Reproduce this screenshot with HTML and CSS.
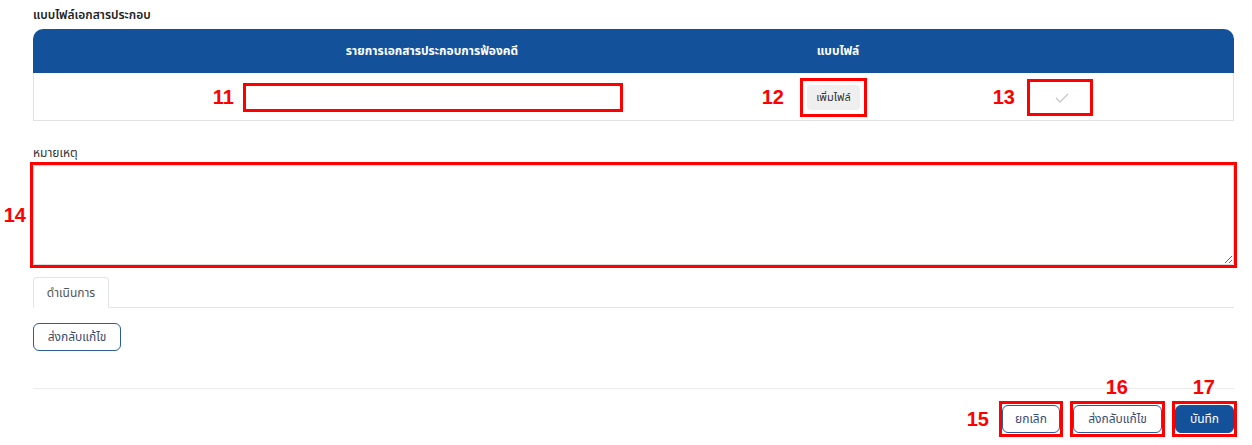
FILE: index.html
```html
<!DOCTYPE html>
<html lang="th">
<head>
<meta charset="utf-8">
<title>แบบไฟล์เอกสารประกอบ</title>
<link rel="stylesheet" href="styles.css">
</head>
<body>
<div class="page">
  <div class="section-title">แบบไฟล์เอกสารประกอบ</div>

  <div class="doc-table">
    <div class="doc-head">
      <div class="cell cell-name">รายการเอกสารประกอบการฟ้องคดี</div>
      <div class="cell cell-type">แบบไฟล์</div>
      <div class="cell cell-check"></div>
    </div>
    <div class="doc-row">
      <div class="cell cell-name">
        <div class="anno">
          <span class="anno-num num-left">11</span>
          <div class="anno-box box-name"></div>
        </div>
      </div>
      <div class="cell cell-type">
        <div class="anno">
          <span class="anno-num num-left num-12">12</span>
          <div class="anno-box box-file"><button class="btn-file" type="button">เพิ่มไฟล์</button></div>
        </div>
      </div>
      <div class="cell cell-check">
        <div class="anno">
          <span class="anno-num num-left num-13">13</span>
          <div class="anno-box box-check">
            <svg class="check" width="14" height="10" viewBox="0 0 14 10"><polyline points="1,5 5,9 13,1" fill="none" stroke="#c8c8c8" stroke-width="1.3"/></svg>
          </div>
        </div>
      </div>
    </div>
  </div>

  <div class="note-label">หมายเหตุ</div>
  <div class="anno anno-block">
    <span class="anno-num num-left num-14">14</span>
    <div class="anno-box box-note"><textarea class="note"></textarea></div>
  </div>

  <div class="tabs">
    <div class="tab">ดำเนินการ</div>
  </div>
  <div class="actions">
    <button class="btn btn-outline btn-return" type="button">ส่งกลับแก้ไข</button>
  </div>

  <div class="divider"></div>

  <div class="footer">
    <div class="anno">
      <span class="anno-num num-left num-15">15</span>
      <div class="anno-box box-btn"><button class="btn btn-outline btn-cancel" type="button">ยกเลิก</button></div>
    </div>
    <div class="anno">
      <span class="anno-num num-top">16</span>
      <div class="anno-box box-btn"><button class="btn btn-outline btn-send" type="button">ส่งกลับแก้ไข</button></div>
    </div>
    <div class="anno">
      <span class="anno-num num-top">17</span>
      <div class="anno-box box-btn"><button class="btn btn-primary btn-save" type="button">บันทึก</button></div>
    </div>
  </div>
</div>
</body>
</html>
```

FILE: styles.css
```css
* { box-sizing: border-box; }

body {
  margin: 0;
  background: #ffffff;
  font-family: "Noto Sans", "Noto Sans Thai", "Loma", "Garuda", sans-serif;
  color: #222;
}

.page {
  padding: 6px 18px 0 33px;
}

.section-title {
  font-size: 12px;
  font-weight: 600;
  line-height: 17px;
  color: #222;
  height: 23px;
}

.doc-table {
  width: 100%;
}

.doc-head,
.doc-row {
  display: grid;
  grid-template-columns: 751px 100px 1fr;
  align-items: center;
}

.doc-head {
  height: 44px;
  background: #14519b;
  border-radius: 10px 10px 0 0;
  color: #ffffff;
  font-size: 12px;
  font-weight: 700;
}

.doc-row {
  height: 48px;
  border: 1px solid #e2e2e2;
  border-top: none;
}

.cell {
  display: flex;
  justify-content: center;
  align-items: center;
}

.cell-name { padding-left: 47px; }
.doc-head .cell-type { padding-left: 8px; }
.doc-row .cell-type { padding-right: 3px; }
.doc-row .cell-check { padding-left: 2px; }

.anno {
  position: relative;
  display: inline-flex;
}

.anno-box {
  border: 3px solid #ff0000;
  display: flex;
  align-items: center;
  justify-content: center;
}

.anno-num {
  position: absolute;
  font-family: "Liberation Sans", Arial, sans-serif;
  font-weight: 700;
  font-size: 20px;
  line-height: 20px;
  color: #ff0000;
  white-space: nowrap;
}

.num-left {
  right: calc(100% + 9px);
  top: 50%;
  transform: translateY(-50%);
}

.num-12 { right: calc(100% + 16px); }
.num-13 { right: calc(100% + 12px); }

.num-top {
  bottom: calc(100% + 4px);
  left: 50%;
  transform: translateX(-53%);
}

.box-name {
  width: 380px;
  height: 29px;
  margin-top: 2px;
}

.box-file {
  padding: 4px 4px 4px;
  margin-top: 1px;
}

.btn-file {
  width: 53px;
  height: 25px;
  border: none;
  border-radius: 4px;
  background: #efefef;
  font-family: inherit;
  font-size: 11px;
  color: #333;
  padding: 0;
}

.box-check {
  width: 66px;
  height: 37px;
  margin-top: 1px;
}

.check { display: block; margin-left: 4px; margin-top: 2px; }

.note-label {
  margin-top: 24px;
  font-size: 12px;
  line-height: 16px;
  color: #333;
  height: 17px;
}

.anno-block {
  display: flex;
  margin: 0 -3px;
}

.box-note {
  flex: 1;
  padding: 0;
}

.num-14 { right: calc(100% + 4px); }

.note {
  display: block;
  width: 100%;
  height: 100px;
  border: 1px solid #dcdcdc;
  border-radius: 2px;
  resize: vertical;
  font-family: inherit;
  font-size: 12px;
  margin: 0;
}

.tabs {
  margin-top: 9px;
  display: flex;
  border-bottom: 1px solid #e1e4e8;
}

.tab {
  width: 76px;
  height: 31px;
  border: 1px solid #e1e4e8;
  border-bottom: 1px solid #ffffff;
  margin-bottom: -1px;
  border-radius: 4px 4px 0 0;
  font-size: 12px;
  color: #555;
  display: flex;
  align-items: center;
  justify-content: center;
}

.actions {
  margin-top: 15px;
  display: flex;
}

.btn {
  height: 28px;
  border-radius: 6px;
  font-family: inherit;
  font-size: 12px;
  padding: 0;
  cursor: pointer;
}

.btn-outline {
  background: #ffffff;
  border: 1.5px solid #2d5c9c;
  color: #3b4a6e;
}

.btn-primary {
  background: #14519b;
  border: 1.5px solid #14519b;
  color: #ffffff;
}

.btn-return { width: 88px; }

.divider {
  margin-top: 37px;
  border-top: 1px solid #ececec;
}

.footer {
  margin-top: 12px;
  margin-right: -3px;
  display: flex;
  justify-content: flex-end;
  gap: 7px;
}

.box-btn { padding: 1px 0; }

.num-15 { right: calc(100% + 10px); }

.btn-cancel { width: 58px; }
.btn-send { width: 89px; }
.btn-save { width: 59px; }
```
